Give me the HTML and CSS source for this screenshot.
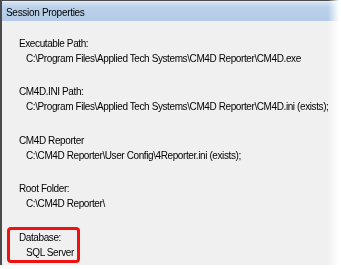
FILE: index.html
```html
<!DOCTYPE html>
<html lang="en">
<head>
    <meta charset="UTF-8">
    <meta name="viewport" content="width=device-width, initial-scale=1.0">
    <title>Session Properties</title>
    <link rel="stylesheet" href="styles.css">
</head>
<body>

<div class="window">
    <div class="titlebar">Session Properties</div>
    <div class="content">
        <div class="group">
            <div class="label">Executable Path:</div>
            <div class="value">C:\Program Files\Applied Tech Systems\CM4D Reporter\CM4D.exe</div>
        </div>
        <div class="group">
            <div class="label">CM4D.INI Path:</div>
            <div class="value">C:\Program Files\Applied Tech Systems\CM4D Reporter\CM4D.ini (exists);</div>
        </div>
        <div class="group">
            <div class="label">CM4D Reporter</div>
            <div class="value">C:\CM4D Reporter\User Config\4Reporter.ini (exists);</div>
        </div>
        <div class="group">
            <div class="label">Root Folder:</div>
            <div class="value">C:\CM4D Reporter\</div>
        </div>
        <div class="group highlight">
            <div class="label">Database:</div>
            <div class="value">SQL Server</div>
        </div>
    </div>
</div>

</body>
</html>
```

FILE: styles.css
```css
body {
    margin: 0;
    background-color: #ffffff;
    font-family: "Liberation Sans", Arial, sans-serif;
    color: #000;
}
.window {
    width: 341px;
    height: 265px;
    box-sizing: border-box;
    border-top: 1px solid #4b4b4b;
    border-left: 2px solid #4b4b4b;
    background-color: #f0f0f0;
    -webkit-mask-image: linear-gradient(to right, #000 328px, transparent 339px);
    mask-image: linear-gradient(to right, #000 328px, transparent 339px);
}
.titlebar {
    height: 20px;
    line-height: 21px;
    padding-left: 4px;
    font-size: 10px;
    letter-spacing: -0.3px;
    background: linear-gradient(#d3e2f2, #b9d1ea 30%, #b3cbe6);
    border-top: 1px solid #e6eef8;
    box-sizing: border-box;
}
.content {
    padding: 11.5px 0 0 5px;
}
.group {
    border: 3px solid transparent;
    padding: 0 9px;
    margin-bottom: 12.5px;
    font-size: 10px;
    letter-spacing: -0.4px;
    line-height: 15px;
    white-space: nowrap;
}
.value {
    padding-left: 7px;
}
.highlight {
    width: 73px;
    box-sizing: border-box;
    border-color: #ee1111;
    border-radius: 4px;
}
```
